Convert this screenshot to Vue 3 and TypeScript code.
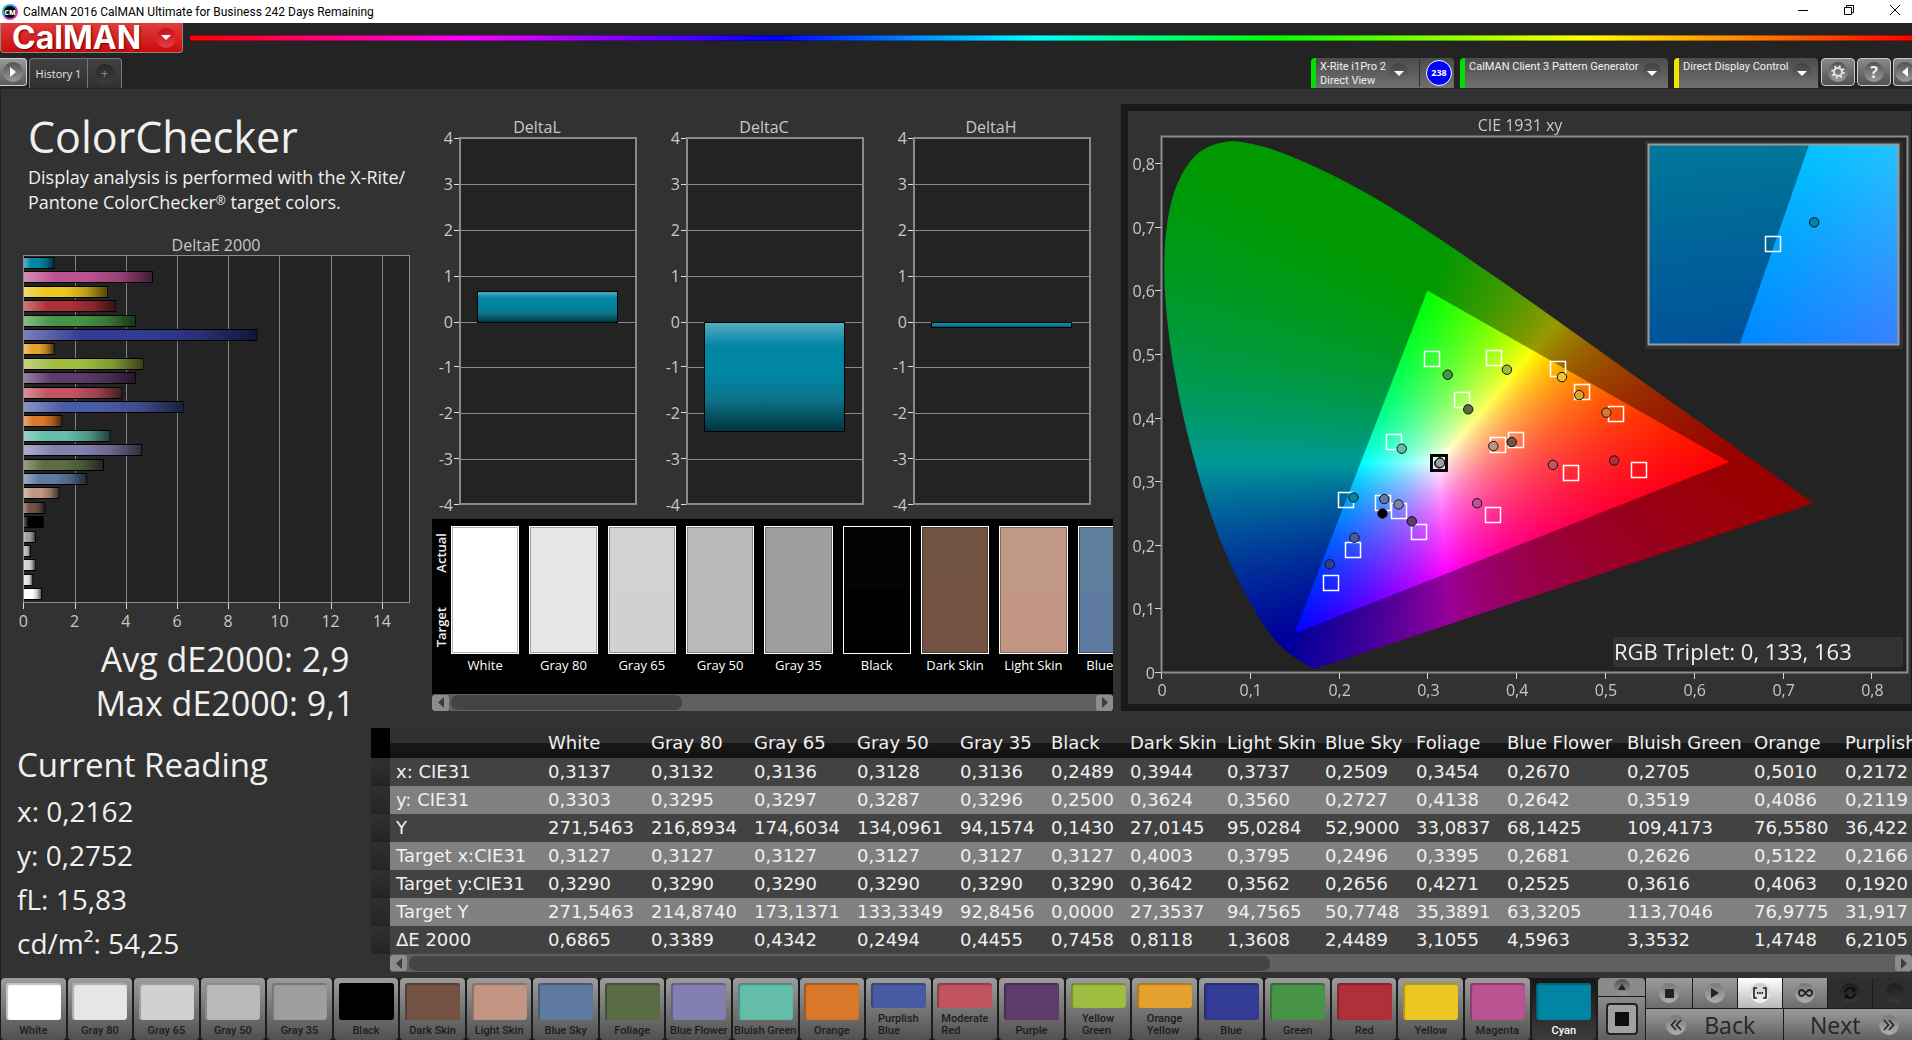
<script setup lang="ts">
import { onMounted, ref } from 'vue'

interface Patch {
  name: string
  color: string
  actual: string
  dE: number
  measured: [number, number]
  target: [number, number]
}

const patches: Patch[] = [
  { name: 'White', color: '#ffffff', actual: '#ffffff', dE: 0.6865, measured: [0.3137, 0.3303], target: [0.3127, 0.329] },
  { name: 'Gray 80', color: '#e6e6e6', actual: '#e7e7e6', dE: 0.3389, measured: [0.3132, 0.3295], target: [0.3127, 0.329] },
  { name: 'Gray 65', color: '#d1d1d1', actual: '#d2d2d0', dE: 0.4342, measured: [0.3136, 0.3297], target: [0.3127, 0.329] },
  { name: 'Gray 50', color: '#bababa', actual: '#bababa', dE: 0.2494, measured: [0.3128, 0.3287], target: [0.3127, 0.329] },
  { name: 'Gray 35', color: '#9e9e9e', actual: '#9f9f9e', dE: 0.4455, measured: [0.3136, 0.3296], target: [0.3127, 0.329] },
  { name: 'Black', color: '#000000', actual: '#020305', dE: 0.7458, measured: [0.2489, 0.25], target: [0.3127, 0.329] },
  { name: 'Dark Skin', color: '#735244', actual: '#735344', dE: 0.8118, measured: [0.3944, 0.3624], target: [0.4003, 0.3642] },
  { name: 'Light Skin', color: '#c29682', actual: '#c19785', dE: 1.3608, measured: [0.3737, 0.356], target: [0.3795, 0.3562] },
  { name: 'Blue Sky', color: '#5e7a9f', actual: '#5f7d9c', dE: 2.4489, measured: [0.2509, 0.2727], target: [0.2496, 0.2656] },
  { name: 'Foliage', color: '#596c43', actual: '#5c6c45', dE: 3.1055, measured: [0.3454, 0.4138], target: [0.3395, 0.4271] },
  { name: 'Blue Flower', color: '#8380b1', actual: '#8583ae', dE: 4.5963, measured: [0.267, 0.2642], target: [0.2681, 0.2525] },
  { name: 'Bluish Green', color: '#63bda8', actual: '#6abba8', dE: 3.3532, measured: [0.2705, 0.3519], target: [0.2626, 0.3616] },
  { name: 'Orange', color: '#d97829', actual: '#d6792b', dE: 1.4748, measured: [0.501, 0.4086], target: [0.5122, 0.4063] },
  { name: 'Purplish Blue', color: '#4a5ba5', actual: '#4f61a0', dE: 6.2105, measured: [0.2172, 0.2119], target: [0.2166, 0.192] },
  { name: 'Moderate Red', color: '#c25361', actual: '#bb5561', dE: 3.82, measured: [0.4408, 0.3265], target: [0.4613, 0.3123] },
  { name: 'Purple', color: '#5d3c6b', actual: '#5c4069', dE: 4.36, measured: [0.2819, 0.2377], target: [0.2904, 0.2209] },
  { name: 'Yellow Green', color: '#9fbc40', actual: '#9fb948', dE: 4.65, measured: [0.389, 0.4761], target: [0.3753, 0.4944] },
  { name: 'Orange Yellow', color: '#e6a22e', actual: '#e5a132', dE: 1.17, measured: [0.4704, 0.4362], target: [0.4738, 0.4409] },
  { name: 'Blue', color: '#333c94', actual: '#38428e', dE: 9.1, measured: [0.1896, 0.1701], target: [0.1919, 0.1401] },
  { name: 'Green', color: '#479446', actual: '#4f924d', dE: 4.36, measured: [0.3223, 0.4682], target: [0.3047, 0.4918] },
  { name: 'Red', color: '#af3038', actual: '#a7343a', dE: 3.56, measured: [0.5097, 0.3333], target: [0.5382, 0.317] },
  { name: 'Yellow', color: '#ecc721', actual: '#e8c52e', dE: 3.25, measured: [0.451, 0.4645], target: [0.4476, 0.4766] },
  { name: 'Magenta', color: '#bb5291', actual: '#b2578d', dE: 5.02, measured: [0.3554, 0.2661], target: [0.3736, 0.2472] },
  { name: 'Cyan', color: '#0085a3', actual: '#1b88a1', dE: 1.17, measured: [0.2162, 0.2752], target: [0.2083, 0.27] },
]
const cyan = patches[23]
const barPatches = [...patches].reverse()
const doubleLine = ['Purplish Blue', 'Moderate Red', 'Yellow Green', 'Orange Yellow']

/* DeltaE bar chart */
const deTicks = [0, 2, 4, 6, 8, 10, 12, 14]
const deX = (v: number) => 23.4 + v * 25.6

/* DeltaL / DeltaC / DeltaH column charts */
const deltas = [
  { title: 'DeltaL', value: 0.66 },
  { title: 'DeltaC', value: -2.38 },
  { title: 'DeltaH', value: -0.13 },
]
const deltaTicks = [4, 3, 2, 1, 0, -1, -2, -3, -4]
const deltaY = (v: number) => Math.round(202.5 - v * 45.8)

/* CIE diagram, drawn in panel coordinates */
const W = 783
const H = 593
const plot = { x: 33, y: 25, w: 746, h: 536 }
const scaleX = 888
const scaleY = 636
const cx = (x: number) => plot.x + x * scaleX
const cy = (y: number) => plot.y + plot.h - y * scaleY
const inset = { x: 521, y: 34, w: 250, h: 200 }
const span = 0.048
const ix = (x: number) => inset.x + inset.w / 2 + ((x - cyan.target[0]) / span) * inset.w
const iy = (y: number) => inset.y + inset.h / 2 - ((y - cyan.target[1]) / span) * inset.h
const xTicks = [0, 0.1, 0.2, 0.3, 0.4, 0.5, 0.6, 0.7, 0.8]
const comma = (v: number) => String(v).replace('.', ',')

const locus: [number, number][] = [
  [0.1741, 0.005], [0.1733, 0.0048], [0.1714, 0.0051], [0.1689, 0.0069], [0.1644, 0.0109], [0.1566, 0.0177],
  [0.144, 0.0297], [0.1355, 0.0399], [0.1241, 0.0578], [0.1096, 0.0868], [0.0913, 0.1327], [0.0687, 0.2007],
  [0.0454, 0.295], [0.0235, 0.4127], [0.0082, 0.5384], [0.0039, 0.6548], [0.0139, 0.7502], [0.0389, 0.812],
  [0.0743, 0.8338], [0.1142, 0.8262], [0.1547, 0.8059], [0.1929, 0.7816], [0.2296, 0.7543], [0.2658, 0.7243],
  [0.3016, 0.6923], [0.3373, 0.6589], [0.3731, 0.6245], [0.4087, 0.5896], [0.4441, 0.5547], [0.4788, 0.5202],
  [0.5125, 0.4866], [0.5448, 0.4544], [0.5752, 0.4242], [0.6029, 0.3965], [0.627, 0.3725], [0.6482, 0.3514],
  [0.6658, 0.334], [0.6915, 0.3083], [0.7079, 0.292], [0.719, 0.2809], [0.726, 0.274], [0.7347, 0.2653],
]
const gamut: [number, number][] = [[0.64, 0.33], [0.3, 0.6], [0.15, 0.06]]

const canvas = ref<HTMLCanvasElement | null>(null)

type Scale = (v: number) => number

/* Brightest linear RGB mix that has the chromaticity x, y */
function chroma(x: number, y: number): [number, number, number] {
  const yy = Math.max(y, 0.0001)
  const X = x / yy
  const Z = (1 - x - yy) / yy
  const lin = [
    3.2406 * X - 1.5372 - 0.4986 * Z,
    -0.9689 * X + 1.8758 + 0.0415 * Z,
    0.0557 * X - 0.204 + 1.057 * Z,
  ].map((c) => Math.max(0, c))
  const top = Math.max(...lin)
  return lin.map((c) => (c / top) * 255) as [number, number, number]
}

function fieldImage(w: number, h: number, toX: Scale, toY: Scale, gain: number) {
  const el = document.createElement('canvas')
  el.width = w
  el.height = h
  const c = el.getContext('2d')!
  const img = c.createImageData(w, h)
  for (let j = 0; j < h; j++) {
    for (let i = 0; i < w; i++) {
      const rgb = chroma(toX(i + 0.5), toY(j + 0.5))
      const o = (j * w + i) * 4
      img.data[o] = rgb[0] * gain
      img.data[o + 1] = rgb[1] * gain
      img.data[o + 2] = rgb[2] * gain
      img.data[o + 3] = 255
    }
  }
  c.putImageData(img, 0, 0)
  return el
}

function smoothPath(points: [number, number][], sx: Scale, sy: Scale) {
  const p = new Path2D()
  const at = (i: number) => points[Math.min(points.length - 1, Math.max(0, i))]
  p.moveTo(sx(points[0][0]), sy(points[0][1]))
  for (let i = 0; i < points.length - 1; i++) {
    const [a, b, c, d] = [at(i - 1), at(i), at(i + 1), at(i + 2)]
    p.bezierCurveTo(
      sx(b[0] + (c[0] - a[0]) / 6), sy(b[1] + (c[1] - a[1]) / 6),
      sx(c[0] - (d[0] - b[0]) / 6), sy(c[1] - (d[1] - b[1]) / 6),
      sx(c[0]), sy(c[1]),
    )
  }
  p.closePath()
  return p
}

function trianglePath(sx: Scale, sy: Scale) {
  const p = new Path2D()
  gamut.forEach(([x, y], i) => (i ? p.lineTo(sx(x), sy(y)) : p.moveTo(sx(x), sy(y))))
  p.closePath()
  return p
}

function paint(ctx: CanvasRenderingContext2D, box: { x: number; y: number; w: number; h: number }, sx: Scale, sy: Scale, ux: Scale, uy: Scale) {
  ctx.save()
  ctx.clip(smoothPath(locus, sx, sy))
  const toX = (i: number) => ux(box.x + i)
  const toY = (j: number) => uy(box.y + j)
  ctx.drawImage(fieldImage(box.w, box.h, toX, toY, 0.6), box.x, box.y)
  ctx.clip(trianglePath(sx, sy))
  ctx.drawImage(fieldImage(box.w, box.h, toX, toY, 1), box.x, box.y)
  ctx.restore()
}

onMounted(() => {
  const ctx = canvas.value!.getContext('2d')!
  ctx.fillStyle = '#232323'
  ctx.fillRect(plot.x, plot.y, plot.w, plot.h)
  paint(ctx, plot, cx, cy, (p) => (p - plot.x) / scaleX, (p) => (plot.y + plot.h - p) / scaleY)
  ctx.fillStyle = '#303030'
  ctx.fillRect(inset.x - 4, inset.y - 4, inset.w + 8, inset.h + 8)
  ctx.save()
  ctx.beginPath()
  ctx.rect(inset.x, inset.y, inset.w, inset.h)
  ctx.clip()
  paint(ctx, inset, ix, iy,
    (p) => cyan.target[0] + ((p - inset.x) / inset.w - 0.5) * span,
    (p) => cyan.target[1] - ((p - inset.y) / inset.h - 0.5) * span)
  ctx.restore()
})

/* Results table */
const columns = [
  { name: 'White', width: 103 }, { name: 'Gray 80', width: 103 }, { name: 'Gray 65', width: 103 },
  { name: 'Gray 50', width: 103 }, { name: 'Gray 35', width: 91 }, { name: 'Black', width: 79 },
  { name: 'Dark Skin', width: 97 }, { name: 'Light Skin', width: 98 }, { name: 'Blue Sky', width: 91 },
  { name: 'Foliage', width: 91 }, { name: 'Blue Flower', width: 120 }, { name: 'Bluish Green', width: 127 },
  { name: 'Orange', width: 91 }, { name: 'Purplish Blue', width: 130 },
]
const rows = [
  { label: 'x: CIE31', cells: '0,3137 0,3132 0,3136 0,3128 0,3136 0,2489 0,3944 0,3737 0,2509 0,3454 0,2670 0,2705 0,5010 0,2172' },
  { label: 'y: CIE31', cells: '0,3303 0,3295 0,3297 0,3287 0,3296 0,2500 0,3624 0,3560 0,2727 0,4138 0,2642 0,3519 0,4086 0,2119' },
  { label: 'Y', cells: '271,5463 216,8934 174,6034 134,0961 94,1574 0,1430 27,0145 95,0284 52,9000 33,0837 68,1425 109,4173 76,5580 36,422' },
  { label: 'Target x:CIE31', cells: '0,3127 0,3127 0,3127 0,3127 0,3127 0,3127 0,4003 0,3795 0,2496 0,3395 0,2681 0,2626 0,5122 0,2166' },
  { label: 'Target y:CIE31', cells: '0,3290 0,3290 0,3290 0,3290 0,3290 0,3290 0,3642 0,3562 0,2656 0,4271 0,2525 0,3616 0,4063 0,1920' },
  { label: 'Target Y', cells: '271,5463 214,8740 173,1371 133,3349 92,8456 0,0000 27,3537 94,7565 50,7748 35,3891 63,3205 113,7046 76,9775 31,917' },
  { label: 'ΔE 2000', cells: '0,6865 0,3389 0,4342 0,2494 0,4455 0,7458 0,8118 1,3608 2,4489 3,1055 4,5963 3,3532 1,4748 6,2105' },
].map((r) => ({ label: r.label, cells: r.cells.split(' ') }))

const readings = ['x: 0,2162', 'y: 0,2752', 'fL: 15,83', 'cd/m²: 54,25']
</script>

<template>
  <div class="app">
    <header class="titlebar">
      <svg class="app-icon" width="16" height="16" viewBox="0 0 16 16" aria-hidden="true">
        <defs>
          <linearGradient id="ring" x1="0" y1="0" x2="1" y2="1">
            <stop offset="0" stop-color="#20d040" /><stop offset=".35" stop-color="#20b0f0" /><stop offset=".6" stop-color="#c030e0" /><stop offset="1" stop-color="#ff5020" />
          </linearGradient>
        </defs>
        <circle cx="8" cy="8" r="8" fill="url(#ring)" />
        <circle cx="8" cy="8" r="6" fill="#000" />
        <text x="8" y="11" text-anchor="middle" font-size="7" font-weight="800" fill="#fff">CM</text>
      </svg>
      <span class="title">CalMAN 2016 CalMAN Ultimate for Business 242 Days Remaining</span>
      <div class="window-buttons">
        <button type="button" aria-label="Minimize"><svg width="10" height="10" viewBox="0 0 10 10"><path d="M0 5.5h10" /></svg></button>
        <button type="button" aria-label="Restore"><svg width="10" height="10" viewBox="0 0 10 10"><path d="M.5 2.5h7v7h-7zM2.5 2.5v-2h7v7h-2" /></svg></button>
        <button type="button" aria-label="Close"><svg width="10" height="10" viewBox="0 0 10 10"><path d="M0 0l10 10M10 0L0 10" /></svg></button>
      </div>
    </header>

    <div class="brand-row">
      <button type="button" class="brand">
        <span class="logo">CalMAN</span>
        <span class="brand-arrow"><svg width="10" height="5" viewBox="0 0 10 5"><path d="M0 0h10L5 5z" fill="#fff" /></svg></span>
      </button>
      <div class="spectrum"></div>
    </div>

    <nav class="tab-row">
      <button type="button" class="play-tab" aria-label="Expand">
        <span class="knob"><svg width="6" height="10" viewBox="0 0 6 10"><path d="M0 0l6 5-6 5z" fill="#fff" /></svg></span>
      </button>
      <button type="button" class="history">History 1</button>
      <button type="button" class="add-tab" aria-label="Add"><span>+</span></button>
      <div class="spacer"></div>
      <button type="button" class="device meter">
        <span class="device-name">X-Rite i1Pro 2<br />Direct View</span>
        <span class="drop"><svg width="10" height="5" viewBox="0 0 10 5"><path d="M0 0h10L5 5z" fill="#fff" /></svg></span>
        <span class="divider"></span>
        <span class="badge">238</span>
      </button>
      <button type="button" class="device source">
        <span class="device-name">CalMAN Client 3 Pattern Generator</span>
        <span class="drop"><svg width="10" height="5" viewBox="0 0 10 5"><path d="M0 0h10L5 5z" fill="#fff" /></svg></span>
      </button>
      <button type="button" class="device display">
        <span class="device-name">Direct Display Control</span>
        <span class="drop"><svg width="10" height="5" viewBox="0 0 10 5"><path d="M0 0h10L5 5z" fill="#fff" /></svg></span>
      </button>
      <button type="button" class="tool" aria-label="Settings">
        <span class="knob">
          <svg width="14" height="14" viewBox="0 0 14 14" fill="none" stroke="#e4e4e4">
            <circle cx="7" cy="7" r="4" stroke-width="2" />
            <circle cx="7" cy="7" r="5.8" stroke-width="2" stroke-dasharray="2 2.555" />
          </svg>
        </span>
      </button>
      <button type="button" class="tool" aria-label="Help"><span class="knob help">?</span></button>
      <button type="button" class="tool cut" aria-label="Collapse">
        <span class="knob"><svg width="6" height="10" viewBox="0 0 6 10"><path d="M6 0L0 5l6 5z" fill="#fff" /></svg></span>
      </button>
    </nav>

    <main>
      <div class="upper">
        <section class="summary">
          <h1>ColorChecker</h1>
          <p class="intro">Display analysis is performed with the X-Rite/<br />Pantone ColorChecker<sup>®</sup> target colors.</p>
          <svg class="de-chart" width="432" height="405" viewBox="0 0 432 405" role="img" aria-label="DeltaE 2000">
            <defs>
              <linearGradient id="shade">
                <stop offset="0" stop-color="#fff" stop-opacity=".35" />
                <stop offset=".25" stop-color="#fff" stop-opacity="0" />
                <stop offset=".5" stop-color="#000" stop-opacity="0" />
                <stop offset=".75" stop-color="#000" stop-opacity=".2" />
                <stop offset="1" stop-color="#000" stop-opacity=".65" />
              </linearGradient>
            </defs>
            <text class="axis" x="216" y="19" text-anchor="middle">DeltaE 2000</text>
            <rect x="24" y="24" width="385" height="346" fill="#232323" />
            <g stroke="#828282">
              <path v-for="t in deTicks.slice(1)" :key="t" :d="`M${Math.round(deX(t)) + 0.5} 24V370`" />
            </g>
            <g stroke="#d8d8d8">
              <path v-for="t in deTicks" :key="t" :d="`M${Math.round(deX(t)) + 0.5} 371V377`" />
            </g>
            <g v-for="(p, i) in barPatches" :key="p.name">
              <rect x="23.5" :y="Math.round(26 + i * 14.4) - 0.5" :width="p.dE * 25.6 + 0.5" height="11" :fill="p.color" stroke="#000" />
              <rect x="24" :y="Math.round(26 + i * 14.4)" :width="p.dE * 25.6 - 0.5" height="10" fill="url(#shade)" />
            </g>
            <rect x="23.5" y="23.5" width="386" height="347" fill="none" stroke="#8c8c8c" />
            <text v-for="t in deTicks" :key="t" class="axis" :x="deX(t)" y="395" text-anchor="middle">{{ t }}</text>
          </svg>
          <p class="stat">Avg dE2000: 2,9</p>
          <p class="stat">Max dE2000: 9,1</p>
        </section>

        <section class="middle">
          <div class="deltas">
            <svg v-for="d in deltas" :key="d.title" width="227" height="405" viewBox="0 0 227 405" role="img" :aria-label="d.title">
              <defs>
                <linearGradient :id="d.title" x1="0" y1="0" x2="0" y2="1">
                  <stop offset="0" stop-color="#56aec3" /><stop offset=".22" stop-color="#0085a3" />
                  <stop offset=".48" stop-color="#0085a3" /><stop offset=".7" stop-color="#0c7489" /><stop offset="1" stop-color="#00343f" />
                </linearGradient>
              </defs>
              <text class="axis" x="105" y="14" text-anchor="middle">{{ d.title }}</text>
              <rect x="28" y="19" width="176" height="366" fill="#232323" />
              <g v-for="t in deltaTicks" :key="t">
                <path v-if="Math.abs(t) < 4" :d="`M28 ${deltaY(t) + 0.5}H204`" stroke="#8a8a8a" />
                <path :d="`M22 ${deltaY(t) + (t < 0 ? -0.5 : 0.5)}H28`" stroke="#e0e0e0" />
                <text class="axis" x="21" :y="deltaY(t) + 6" text-anchor="end">{{ t }}</text>
              </g>
              <rect x="28" y="19" width="176" height="366" fill="none" stroke="#8a8a8a" stroke-width="2" />
              <rect x="45.5" :y="deltaY(Math.max(d.value, 0)) + 0.5" width="140" :height="Math.abs(deltaY(d.value) - deltaY(0))" :fill="`url(#${d.title})`" stroke="#000" />
            </svg>
          </div>

          <div class="compare">
            <div class="compare-view">
              <div class="side"><span>Actual</span><span>Target</span></div>
              <figure v-for="p in patches.slice(0, 9)" :key="p.name">
                <div class="chip">
                  <i :style="{ background: p.actual }"></i>
                  <i :style="{ background: p.color }"></i>
                </div>
                <figcaption>{{ p.name }}</figcaption>
              </figure>
            </div>
            <div class="scrollbar">
              <button type="button" aria-label="Scroll left"><svg width="6" height="11" viewBox="0 0 6 11"><path d="M6 0v11L0 5.5z" /></svg></button>
              <div class="track"><div class="thumb short"></div></div>
              <button type="button" aria-label="Scroll right"><svg width="6" height="11" viewBox="0 0 6 11"><path d="M0 0v11l6-5.5z" /></svg></button>
            </div>
          </div>
        </section>

        <section class="cie">
          <div class="cie-panel">
            <canvas ref="canvas" :width="W" :height="H"></canvas>
            <svg class="overlay" :viewBox="`0 0 ${W} ${H}`" role="img" aria-label="CIE 1931 xy">
              <text class="axis" x="392" y="20" text-anchor="middle">CIE 1931 xy</text>
              <rect :x="plot.x + 0.5" :y="plot.y + 0.5" :width="plot.w" :height="plot.h" fill="none" stroke="#8c8c8c" stroke-width="2" />
              <g stroke="#d8d8d8">
                <path v-for="t in xTicks" :key="'x' + t" :d="`M${Math.round(cx(t)) + 0.5} 562V568`" />
                <path v-for="t in xTicks" :key="'y' + t" :d="`M27 ${Math.round(cy(t)) + 0.5}H33`" />
              </g>
              <g class="axis">
                <text v-for="t in xTicks" :key="'lx' + t" :x="cx(t) + 1" y="585" text-anchor="middle">{{ comma(t) }}</text>
                <text v-for="t in xTicks" :key="'ly' + t" x="27" :y="cy(t) + 7" text-anchor="end">{{ comma(t) }}</text>
              </g>
              <g fill="none">
                <rect v-for="p in patches" :key="p.name" :x="Math.round(cx(p.target[0])) - 7.5" :y="Math.round(cy(p.target[1])) - 7.5" width="15" height="15"
                  :stroke="p.target[0] === 0.3127 ? '#000' : '#fff'" :stroke-width="p.target[0] === 0.3127 ? 2 : 1.5" />
              </g>
              <g stroke="#101010">
                <circle v-for="p in patches" :key="p.name" :cx="cx(p.measured[0]) + 0.5" :cy="cy(p.measured[1]) + 0.5" r="4.7" :fill="p.color" />
              </g>
              <rect :x="inset.x - 0.5" :y="inset.y - 0.5" :width="inset.w" :height="inset.h" fill="none" stroke="#9a9a9a" stroke-width="2" />
              <rect :x="ix(cyan.target[0]) - 8.5" :y="iy(cyan.target[1]) - 8.5" width="15" height="15" fill="none" stroke="#fff" stroke-width="1.5" />
              <circle :cx="ix(cyan.measured[0]) - 1" :cy="iy(cyan.measured[1]) - 1" r="4.7" :fill="cyan.color" stroke="#101010" />
              <rect x="485" y="526" width="290" height="30" fill="#323232" />
              <text x="486" y="549" class="triplet">RGB Triplet: 0, 133, 163</text>
            </svg>
          </div>
        </section>
      </div>

      <div class="lower">
        <section class="current">
          <h2>Current Reading</h2>
          <p v-for="r in readings" :key="r">{{ r }}</p>
        </section>
        <section class="results">
          <table>
            <colgroup>
              <col style="width: 19px" /><col style="width: 152px" />
              <col v-for="c in columns" :key="c.name" :style="{ width: c.width + 'px' }" />
            </colgroup>
            <thead>
              <tr><td class="corner"></td><td></td><th v-for="c in columns" :key="c.name" scope="col">{{ c.name }}</th></tr>
            </thead>
            <tbody>
              <tr v-for="r in rows" :key="r.label">
                <td class="handle"></td>
                <th scope="row">{{ r.label }}</th>
                <td v-for="(c, i) in r.cells" :key="i">{{ c }}</td>
              </tr>
            </tbody>
          </table>
          <div class="scrollbar wide">
            <button type="button" aria-label="Scroll left"><svg width="6" height="11" viewBox="0 0 6 11"><path d="M6 0v11L0 5.5z" /></svg></button>
            <div class="track"><div class="thumb long"></div></div>
            <button type="button" aria-label="Scroll right"><svg width="6" height="11" viewBox="0 0 6 11"><path d="M0 0v11l6-5.5z" /></svg></button>
          </div>
        </section>
      </div>
    </main>

    <footer>
      <div class="patch-list">
        <button v-for="p in patches" :key="p.name" type="button" class="patch" :class="{ active: p.name === 'Cyan' }">
          <i :style="{ background: p.color }"></i>
          <span :class="{ two: doubleLine.includes(p.name) }">{{ p.name }}</span>
        </button>
      </div>
      <div class="window-pick">
        <button type="button" class="up" aria-label="Up"><span class="knob"><svg width="8" height="6" viewBox="0 0 8 6"><path d="M4 0l4 6H0z" fill="#222" /></svg></span></button>
        <button type="button" class="pattern" aria-label="Pattern window"><span></span></button>
      </div>
      <div class="transport">
        <div class="controls">
          <button type="button" aria-label="Stop"><span class="knob"><svg width="9" height="9"><path d="M0 0h9v9H0z" fill="#222" /></svg></span></button>
          <button type="button" aria-label="Play"><span class="knob"><svg width="8" height="10" viewBox="0 0 8 10"><path d="M0 0l8 5-8 5z" fill="#222" /></svg></span></button>
          <button type="button" class="on" aria-label="Read series">
            <span class="knob"><svg width="14" height="12" viewBox="0 0 14 12" fill="none" stroke="#222" stroke-width="1.6"><path d="M4 1H1v10h3M10 1h3v10h-3" /><path d="M4 6h6" stroke-dasharray="1.5 .75" stroke-width="2" /></svg></span>
          </button>
          <button type="button" aria-label="Continuous">
            <span class="knob"><svg width="15" height="8" viewBox="0 0 15 8" fill="none" stroke="#222" stroke-width="1.8"><path d="M7.5 4C6 2 5.200 1 3.900 1a3 3 0 000 6c1.300 0 2.100-1 3.600-3S9.800 1 11.100 1a3 3 0 010 6C9.800 7 9 6 7.500 4z" /></svg></span>
          </button>
          <button type="button" class="off" aria-label="Refresh">
            <span class="knob"><svg width="14" height="14" viewBox="0 0 14 14" fill="none" stroke="#0c0c0c" stroke-width="2"><path d="M2 6.500a5 5 0 018.500-3M12 7.500a5 5 0 01-8.500 3" /><path d="M12.500 1v4.500H8zM1.500 13V8.500H6z" fill="#0c0c0c" stroke="none" /></svg></span>
          </button>
          <button type="button" class="off" aria-label="Record"><span class="knob"></span></button>
        </div>
        <div class="steps">
          <button type="button"><span class="knob"><svg width="12" height="12" viewBox="0 0 12 12" fill="none" stroke="#222" stroke-width="1.6"><path d="M6 1L1.500 6 6 11M11 1L6.500 6l4.500 5" /></svg></span>Back</button>
          <button type="button">Next<span class="knob"><svg width="12" height="12" viewBox="0 0 12 12" fill="none" stroke="#222" stroke-width="1.6"><path d="M1 1l4.500 5L1 11M6 1l4.500 5L6 11" /></svg></span></button>
        </div>
      </div>
    </footer>
  </div>
</template>

<style>
body { background: #232323; overflow: hidden; }
</style>

<style scoped>
.app {
  height: 100vh;
  display: flex;
  flex-direction: column;
  background: #232323;
  color: #f0f0f0;
  font-family: "Open Sans", "Noto Sans", sans-serif;
  overflow: hidden;
}
button { font-family: inherit; border: 0; padding: 0; margin: 0; background: none; color: inherit; }
h1, h2, p, figure { margin: 0; font-weight: 400; }
.knob {
  display: inline-flex;
  align-items: center;
  justify-content: center;
  flex: none;
  width: 20px;
  height: 20px;
  border-radius: 50%;
  background: linear-gradient(#525252, #9a9a9a);
}

.titlebar { flex: none; height: 23px; display: flex; align-items: center; background: #fff; color: #000; font-size: 12px; overflow: hidden; }
.app-icon { margin: 0 5px 0 2px; }
.title { flex: 1; line-height: 24px; font-family: Roboto, sans-serif; }
.window-buttons { display: flex; align-self: stretch; margin-right: -6px; }
.window-buttons button { width: 46px; height: 20px; display: flex; align-items: center; justify-content: center; }
.window-buttons svg { fill: none; stroke: #000; stroke-width: 1; }

.brand-row { flex: none; height: 35px; display: flex; }
.brand {
  width: 183px;
  height: 30px;
  display: flex;
  align-items: center;
  justify-content: space-between;
  padding: 0 6px 0 11px;
  box-sizing: border-box;
  border: 1px solid #8a8a8a;
  border-top: 0;
  border-radius: 0 0 4px 4px;
  background: linear-gradient(#e23c3c, #cc0c0c);
  overflow: hidden;
}
.logo { font: 700 32px/28px Inter, sans-serif; color: #fff; text-shadow: 1px 1px 2px #600; }
.brand-arrow {
  width: 20px; height: 20px; border-radius: 50%;
  display: flex; align-items: center; justify-content: center;
  background: linear-gradient(#c80c18, #e44040);
}
.spectrum {
  flex: 1; height: 4px; margin: 12px 0 0 7px;
  border: 1px solid rgba(0, 0, 0, 0.35);
  border-width: 1px 0;
  background: linear-gradient(90deg, #f00, #f0f 16%, #00f 34%, #0ff 49%, #0f0 63%, #ff0 81%, #f00);
}

.tab-row { flex: none; height: 31px; display: flex; align-items: flex-start; overflow: hidden; }
.play-tab {
  width: 27px; height: 28px; box-sizing: border-box; margin-right: 2px;
  border: 1px solid #d0d0d0; border-left: 0; border-radius: 0 4px 4px 0;
  background: linear-gradient(#9a9a9a, #5a5a5a);
  display: flex; align-items: center; justify-content: center;
}
.history, .add-tab {
  height: 30px; box-sizing: border-box; border: 1px solid #777; border-bottom: 0;
  background: linear-gradient(#424242, #303030); font-size: 11px; color: #e4e4e4;
}
.history { width: 59px; border-radius: 4px 0 0 0; }
.add-tab { width: 34px; border-left: 0; border-radius: 0 4px 0 0; display: flex; align-items: center; justify-content: center; }
.add-tab span { width: 20px; height: 20px; line-height: 20px; border-radius: 50%; background: linear-gradient(#2a2a2a, #3c3c3c); color: #8a8a8a; text-align: center; font-size: 12px; }
.spacer { flex: 1; }
.device {
  height: 30px; display: flex; align-items: center; box-sizing: border-box;
  border-left: 5px solid #00e000; border-radius: 4px 4px 0 0;
  background: linear-gradient(#4c4c4c, #707070);
  margin-right: 6px; padding: 0 6px 0 4px; font-size: 11px; line-height: 14px; text-align: left;
}
.device-name { flex: 1; align-self: flex-start; white-space: nowrap; padding-top: 2px; font-family: Roboto, sans-serif; }
.drop { width: 20px; height: 20px; border-radius: 50%; background: linear-gradient(#404040, #6e6e6e); display: flex; align-items: center; justify-content: center; }
.meter { width: 143px; padding-right: 2px; }
.source { width: 208px; }
.display { width: 144px; border-left-color: #f0e400; margin-right: 3px; }
.divider { width: 1px; height: 28px; margin: 0 6px 0 10px; background: #333; }
.badge { width: 24px; height: 24px; border: 1px solid #fff; border-radius: 50%; background: #00f; font-size: 9px; font-weight: 700; line-height: 24px; text-align: center; color: #fff; }
.tool {
  flex: none; width: 34px; height: 28px; box-sizing: border-box; margin-right: 2px; border: 1px solid #c8c8c8; border-radius: 4px;
  background: linear-gradient(#8a8a8a, #505050); display: flex; align-items: center; justify-content: center;
}
.help { font-size: 16px; font-weight: 700; color: #eee; }
.cut { width: 19px; margin-right: 0; border-right: 0; border-radius: 4px 0 0 4px; padding-left: 3px; overflow: hidden; }

main { flex: 1; min-height: 0; display: flex; flex-direction: column; background: #323232; border-left: 1px solid #222; }
.upper { flex: 1; min-height: 0; display: flex; }
.axis { font-size: 16px; fill: #c8c8c8; }
.summary { flex: none; width: 431px; }
h1 { padding: 19px 0 0 27px; font-size: 43px; line-height: 57px; }
.intro { padding: 0 0 0 27px; font-size: 18px; line-height: 25px; white-space: nowrap; }
.intro sup { font-size: 12px; line-height: 1px; vertical-align: 4px; }
.de-chart { display: block; margin: 17px 0 0 -1px; }
.stat { width: 448px; text-align: center; font-size: 34px; line-height: 44px; }
.middle { flex: none; width: 681px; }
.deltas { display: flex; margin-top: 30px; height: 400px; overflow: visible; }
.deltas svg { flex: none; }
.compare { background: #000; }
.compare-view { height: 175px; display: flex; overflow: hidden; }
.side { flex: none; width: 19px; display: flex; flex-direction: column; justify-content: space-between; height: 114px; padding-top: 14px; font-size: 13px; font-weight: 600; line-height: 18px; }
.side span { writing-mode: vertical-rl; transform: rotate(180deg); }
figure { flex: 0 0 11.5%; box-sizing: border-box; padding: 7px 10px 0 0; }
.chip { box-sizing: border-box; height: 128px; border: 1px solid #fff; outline: 1px solid rgba(0, 0, 0, 0.3); outline-offset: -2px; display: flex; flex-direction: column; }
.chip i { flex: 1; }
figcaption { font-size: 13px; line-height: 22px; text-align: center; white-space: nowrap; color: #fff; }

.scrollbar { height: 17px; display: flex; align-items: center; gap: 2px; background: #606060; border-radius: 3px; }
.scrollbar button { flex: none; width: 17px; height: 16px; border-radius: 3px; background: #8c8c8c; display: flex; align-items: center; justify-content: center; }
.scrollbar path { fill: #3c3c3c; }
.track { flex: 1; }
.thumb { height: 15px; border-radius: 7px; background: #444; }
.short { width: 36%; }
.long { width: 58%; }
.wide { margin-left: 19px; height: 18px; }

.cie { flex: 1; min-width: 0; margin: 15px 0 17px 8px; background: #1a1a1a; padding: 7px 1px 7px 7px; box-sizing: border-box; }
.cie-panel { position: relative; background: #323232; }
.cie-panel canvas { display: block; width: 100%; }
.overlay { position: absolute; inset: 0; width: 100%; height: 100%; }
.triplet { font-size: 22px; fill: #f0f0f0; }

.lower { flex: none; height: 250px; display: flex; }
.current { flex: none; width: 370px; padding: 13px 0 0 16px; box-sizing: border-box; }
h2 { font-size: 33px; line-height: 48px; }
.current p { font-size: 28px; line-height: 44px; }
.results { flex: 1; min-width: 0; overflow: hidden; }
table { table-layout: fixed; border-collapse: collapse; width: 1578px; font: 18px/28px "DejaVu Sans", sans-serif; }
th, td { padding: 0 0 0 6px; font-weight: 400; text-align: left; white-space: nowrap; color: #f0f0f0; height: 28px; }
thead tr { background: linear-gradient(#303030 50%, #181818 50%, #121212); }
thead th, thead td { height: 30px; }
thead .corner { background: #000; }
tbody tr { background: #424242; }
tbody tr:nth-child(even) { background: #808080; }
tbody .handle { background: linear-gradient(#303030, #242424); }

footer { flex: none; height: 62px; display: flex; background: #1c1c1c; }
.patch-list { flex: 1; display: flex; min-width: 0; padding-left: 1px; }
.patch {
  flex: 1 1 0; min-width: 0; margin-right: 2px; padding: 5px 0 3px; display: flex; flex-direction: column; align-items: center;
  border-radius: 4px; background: linear-gradient(#9c9c9c, #505050); color: #1c1c1c;
}
.patch i { flex: 1; width: 55px; border-radius: 3px; box-shadow: inset 1px 1px 1px 1px rgba(0, 0, 0, 0.25); }
.patch span { font: 500 11px/12px Roboto, sans-serif; padding-top: 5px; white-space: nowrap; }
.patch .two { white-space: normal; width: min-content; text-align: left; }
.patch.active { background: linear-gradient(#161616, #3c3c3c); color: #fff; }
.window-pick { flex: none; width: 47px; display: flex; flex-direction: column; gap: 1px; }
.up { height: 18px; border-radius: 4px 4px 0 0; background: #8a8a8a; display: flex; align-items: center; justify-content: center; overflow: hidden; }
.up .knob { width: 16px; height: 16px; }
.pattern { flex: 1; background: linear-gradient(#8a8a8a, #606060); display: flex; align-items: center; justify-content: center; }
.pattern span { width: 14px; height: 14px; border: 7px solid #a0a0a0; outline: 2px solid #222; background: #0c0c0c; border-radius: 2px; }
.transport { flex: none; width: 266px; margin-left: 1px; display: flex; flex-direction: column; gap: 1px; }
.controls { height: 30px; display: flex; gap: 1px; overflow: hidden; }
.controls button { flex: none; width: 44px; background: linear-gradient(#9c9c9c, #6c6c6c); display: flex; align-items: center; justify-content: center; }
.controls button:first-child { width: 46px; }
.controls .knob, .steps .knob { background: linear-gradient(#787878, #b0b0b0); }
.controls .on { background: linear-gradient(#fff, #b8b8b8); }
.controls .on .knob { background: linear-gradient(#c8c8c8, #f4f4f4); }
.controls .off { background: #2e2e2e; }
.controls .off .knob { background: linear-gradient(#1c1c1c, #383838); }
.steps { flex: 1; display: flex; gap: 1px; }
.steps button { flex: 1; display: flex; align-items: center; justify-content: space-between; padding: 0 28px 0 20px; background: linear-gradient(#9c9c9c, #606060); font-size: 23px; line-height: 30px; color: #262626; }
.steps button:last-child { padding: 0 13px 0 26px; }
</style>
